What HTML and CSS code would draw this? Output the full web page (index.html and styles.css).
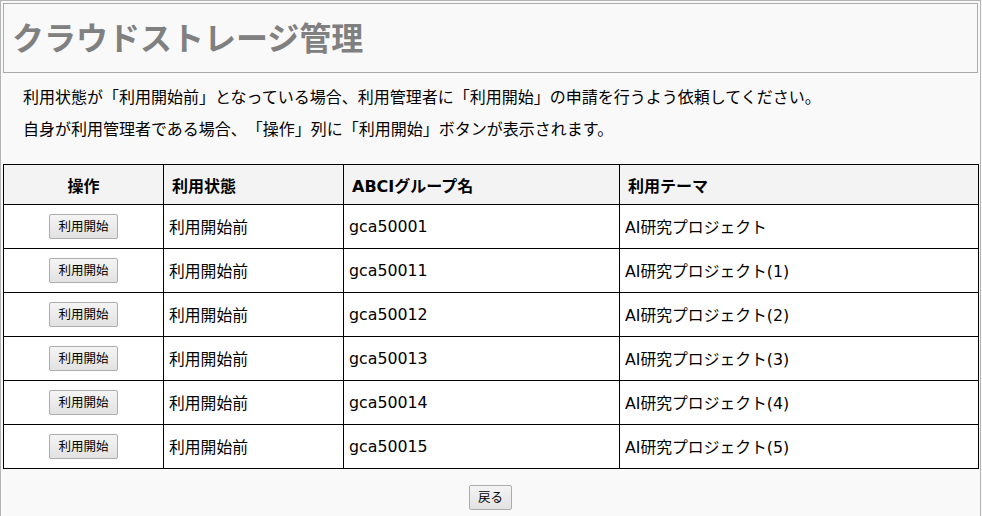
FILE: index.html
```html
<!DOCTYPE html>
<html lang="ja">
<head>
<meta charset="utf-8">
<title>クラウドストレージ管理</title>
<link rel="stylesheet" href="styles.css">
</head>
<body>
<div class="page">
  <div class="title-box"><h1 class="title">クラウドストレージ管理</h1></div>
  <div class="notes">
    <p>利用状態が「利用開始前」となっている場合、利用管理者に「利用開始」の申請を行うよう依頼してください。</p>
    <p>自身が利用管理者である場合、「操作」列に「利用開始」ボタンが表示されます。</p>
  </div>
  <table class="grid">
    <colgroup>
      <col class="c1"><col class="c2"><col class="c3"><col class="c4">
    </colgroup>
    <thead>
      <tr><th class="center">操作</th><th>利用状態</th><th>ABCIグループ名</th><th>利用テーマ</th></tr>
    </thead>
    <tbody>
      <tr><td class="center"><button class="btn">利用開始</button></td><td>利用開始前</td><td>gca50001</td><td>AI研究プロジェクト</td></tr>
      <tr><td class="center"><button class="btn">利用開始</button></td><td>利用開始前</td><td>gca50011</td><td>AI研究プロジェクト(1)</td></tr>
      <tr><td class="center"><button class="btn">利用開始</button></td><td>利用開始前</td><td>gca50012</td><td>AI研究プロジェクト(2)</td></tr>
      <tr><td class="center"><button class="btn">利用開始</button></td><td>利用開始前</td><td>gca50013</td><td>AI研究プロジェクト(3)</td></tr>
      <tr><td class="center"><button class="btn">利用開始</button></td><td>利用開始前</td><td>gca50014</td><td>AI研究プロジェクト(4)</td></tr>
      <tr><td class="center"><button class="btn">利用開始</button></td><td>利用開始前</td><td>gca50015</td><td>AI研究プロジェクト(5)</td></tr>
    </tbody>
  </table>
  <div class="footer"><button class="btn">戻る</button></div>
</div>
</body>
</html>
```

FILE: styles.css
```css
html, body {
  margin: 0;
  padding: 0;
  background: #f9f9f9;
}
body {
  font-family: "DejaVu Sans", "Noto Sans CJK JP", sans-serif;
  color: #000;
  text-spacing-trim: space-all;
}
.page {
  width: 981px;
  min-height: 516px;
  box-sizing: border-box;
  border: 1px solid #b4b4b4;
  border-bottom: none;
  padding: 2px 2px 0 2px;
  background: #f9f9f9;
}
.title-box {
  height: 70px;
  box-sizing: border-box;
  border: 1px solid #aaa;
  display: flex;
  align-items: center;
  padding: 0 0 5px 8px;
}
.title {
  margin: 0;
  font-family: "Noto Sans CJK JP", sans-serif;
  font-size: 32px;
  font-weight: bold;
  color: #808080;
  line-height: 1;
}
.notes {
  padding: 7px 0 0 20px;
  height: 91px;
  box-sizing: border-box;
}
.notes p {
  margin: 0;
  font-family: "Noto Sans CJK JP", sans-serif;
  font-size: 16px;
  line-height: 32px;
}
.grid {
  width: 976px;
  border-collapse: collapse;
  table-layout: fixed;
  background: #fff;
}
.c1 { width: 160px; }
.c2 { width: 180px; }
.c3 { width: 276px; }
.grid th, .grid td {
  border: 1.5px solid #000;
  text-align: left;
  vertical-align: middle;
}
.grid th {
  background: #f3f3f3;
  height: 39px;
  padding: 0 8px;
  font-size: 16px;
  font-weight: bold;
}
.grid td {
  height: 43px;
  padding: 0 5px;
  font-size: 15.8px;
}
.grid .center {
  text-align: center;
}
.btn {
  font-family: "Noto Sans CJK JP", sans-serif;
  font-size: 12.5px;
  color: #000;
  height: 25px;
  padding: 0 8px;
  border: 1px solid #adadad;
  border-radius: 2px;
  background: linear-gradient(#f4f4f4, #e2e2e2);
  line-height: 1;
}
.footer {
  display: flex;
  justify-content: center;
  padding-top: 16px;
}
```
